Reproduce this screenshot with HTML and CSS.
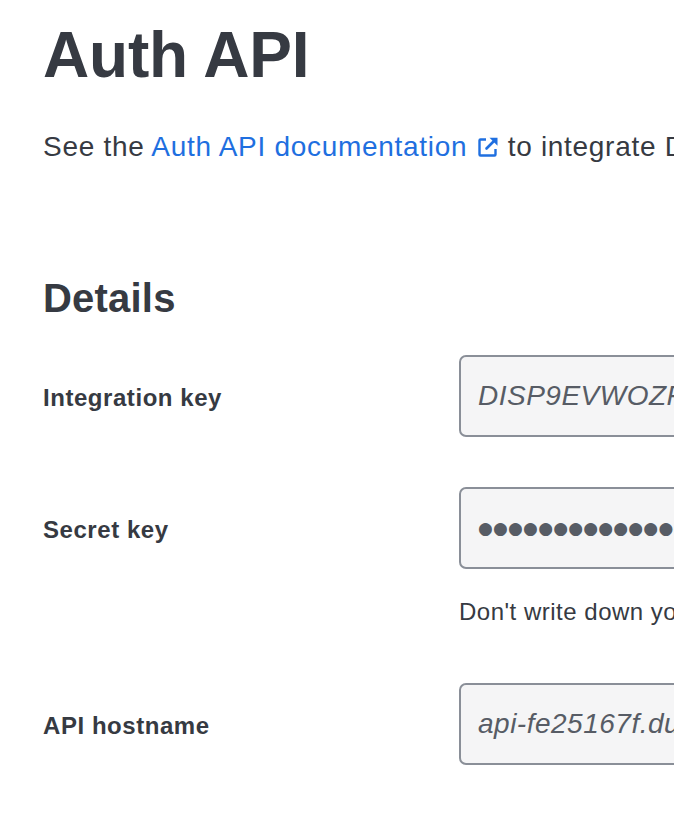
FILE: index.html
```html
<!DOCTYPE html>
<html>
<head>
<meta charset="utf-8">
<link rel="stylesheet" href="styles.css">
</head>
<body>
<main class="page">
  <h1 class="title">Auth API</h1>
  <p class="intro">See the <a class="doc-link" href="#">Auth API documentation<svg class="ext-icon" viewBox="0 0 22 22" width="22" height="22" aria-hidden="true"><path d="M9 3.5H3.5a1 1 0 0 0-1 1v14a1 1 0 0 0 1 1h14a1 1 0 0 0 1-1V13" fill="none" stroke="currentColor" stroke-width="2.4"/><path d="M9.5 12.5L18.5 3.5" fill="none" stroke="currentColor" stroke-width="2.6" stroke-linecap="round"/><path d="M12.5 1.8h8v8z" fill="currentColor"/></svg></a> to integrate Duo into your custom application.</p>

  <h2 class="section-title">Details</h2>

  <div class="fields">
    <div class="field">
      <label class="field-label">Integration key</label>
      <div class="field-control">
        <div class="input"><span class="input-value">DISP9EVWOZFEXW4HMKR7</span></div>
      </div>
    </div>
    <div class="field">
      <label class="field-label">Secret key</label>
      <div class="field-control">
        <div class="input"><span class="input-dots">●●●●●●●●●●●●●●●●●●●●●●●●●●●●●●●●●●●●●●</span></div>
        <p class="help">Don't write down your secret key or share it with anyone.</p>
      </div>
    </div>
    <div class="field">
      <label class="field-label">API hostname</label>
      <div class="field-control">
        <div class="input"><span class="input-value">api-fe25167f.duosecurity.com</span></div>
      </div>
    </div>
  </div>
</main>
</body>
</html>
```

FILE: styles.css
```css
html, body {
  margin: 0;
  padding: 0;
  background: #ffffff;
  overflow: hidden;
}

body {
  font-family: "Liberation Sans", Arial, sans-serif;
  color: #363a42;
}

.page {
  width: 1400px;
  padding: 17px 0 0 43px;
  white-space: nowrap;
}

.title {
  margin: 0;
  font-size: 64px;
  line-height: 1.2;
  font-weight: 700;
  letter-spacing: -0.2px;
}

.intro {
  margin: 32px 0 0;
  font-size: 28px;
  line-height: 42px;
  letter-spacing: 0.7px;
}

.doc-link {
  color: #1f6fe0;
  text-decoration: none;
}

.ext-icon {
  display: inline-block;
  vertical-align: -2px;
  margin-left: 10px;
  margin-right: 0;
}

.section-title {
  margin: 106px 0 0;
  font-size: 40px;
  line-height: 48px;
  font-weight: 700;
  letter-spacing: 0.2px;
}

.fields {
  margin-top: 33px;
  display: flex;
  flex-direction: column;
  gap: 50px;
}

.field {
  display: grid;
  grid-template-columns: 416px 900px;
  align-items: start;
}

.field-label {
  box-sizing: border-box;
  height: 82px;
  padding-top: 3px;
  font-size: 24px;
  font-weight: 700;
  letter-spacing: 0.55px;
  line-height: 79px;
}

.input {
  box-sizing: border-box;
  height: 82px;
  border: 2px solid #8a8f98;
  border-radius: 7px;
  background: #f5f5f6;
  display: flex;
  align-items: center;
  padding-left: 17px;
}

.input-value {
  font-size: 28px;
  font-style: italic;
  color: #575c65;
  letter-spacing: 0.5px;
}

.input-dots {
  font-family: "DejaVu Sans", sans-serif;
  font-size: 17px;
  letter-spacing: 0.2px;
  color: #575c65;
}

.help {
  margin: 25px 0 0;
  padding-bottom: 3px;
  font-size: 24px;
  line-height: 36px;
  letter-spacing: 0.5px;
}
```
